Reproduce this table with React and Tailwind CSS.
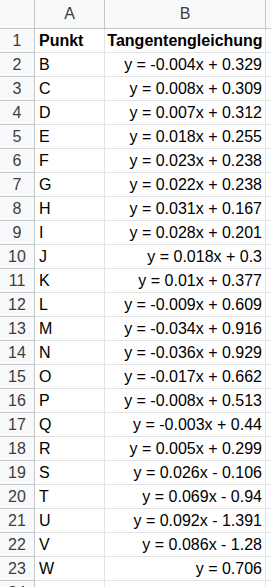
const rows = [
  ["B", "y = -0.004x + 0.329"],
  ["C", "y = 0.008x + 0.309"],
  ["D", "y = 0.007x + 0.312"],
  ["E", "y = 0.018x + 0.255"],
  ["F", "y = 0.023x + 0.238"],
  ["G", "y = 0.022x + 0.238"],
  ["H", "y = 0.031x + 0.167"],
  ["I", "y = 0.028x + 0.201"],
  ["J", "y = 0.018x + 0.3"],
  ["K", "y = 0.01x + 0.377"],
  ["L", "y = -0.009x + 0.609"],
  ["M", "y = -0.034x + 0.916"],
  ["N", "y = -0.036x + 0.929"],
  ["O", "y = -0.017x + 0.662"],
  ["P", "y = -0.008x + 0.513"],
  ["Q", "y = -0.003x + 0.44"],
  ["R", "y = 0.005x + 0.299"],
  ["S", "y = 0.026x - 0.106"],
  ["T", "y = 0.069x - 0.94"],
  ["U", "y = 0.092x - 1.391"],
  ["V", "y = 0.086x - 1.28"],
  ["W", "y = 0.706"],
];

export default function App() {
  const cell = "h-[24px] border-r border-b border-[#e2e3e3] flex items-center";
  const idx = "h-[24px] border-r border-b border-[#c4c7c5] bg-[#f8f9fa] flex items-center justify-center text-[#3c3c3c]";

  return (
    <div className="w-[271px] h-[587px] overflow-hidden bg-white font-['Liberation_Sans',Arial,sans-serif] text-[16px] text-black">
      <div className="grid grid-cols-[35px_70px_161px_1fr]">
        {/* column headers */}
        <div className="h-[29px] border-r border-b border-[#c4c7c5] bg-[#f8f9fa]" />
        <div className="h-[29px] border-r border-b border-[#c4c7c5] bg-[#f8f9fa] flex items-center justify-center text-[#3c3c3c]">A</div>
        <div className="h-[29px] border-r border-b border-[#c4c7c5] bg-[#f8f9fa] flex items-center justify-center text-[#3c3c3c]">B</div>
        <div className="h-[29px] border-b border-[#c4c7c5] bg-[#f8f9fa]" />

        {/* row 1 */}
        <div className={idx}>1</div>
        <div className={cell + " pl-[4px] font-bold"}>Punkt</div>
        <div className={cell + " justify-center font-bold whitespace-nowrap"}>Tangentengleichung</div>
        <div className={cell + " border-r-0"} />

        {rows.map(([p, eq], i) => (
          <div key={p} className="contents">
            <div className={idx}>{i + 2}</div>
            <div className={cell + " pl-[4px]"}>{p}</div>
            <div className={cell + " justify-end pr-[3px] whitespace-nowrap"}>{eq}</div>
            <div className={cell + " border-r-0"} />
          </div>
        ))}

        <div className={idx}>24</div>
        <div className={cell} />
        <div className={cell} />
        <div className={cell + " border-r-0"} />
      </div>
    </div>
  );
}
